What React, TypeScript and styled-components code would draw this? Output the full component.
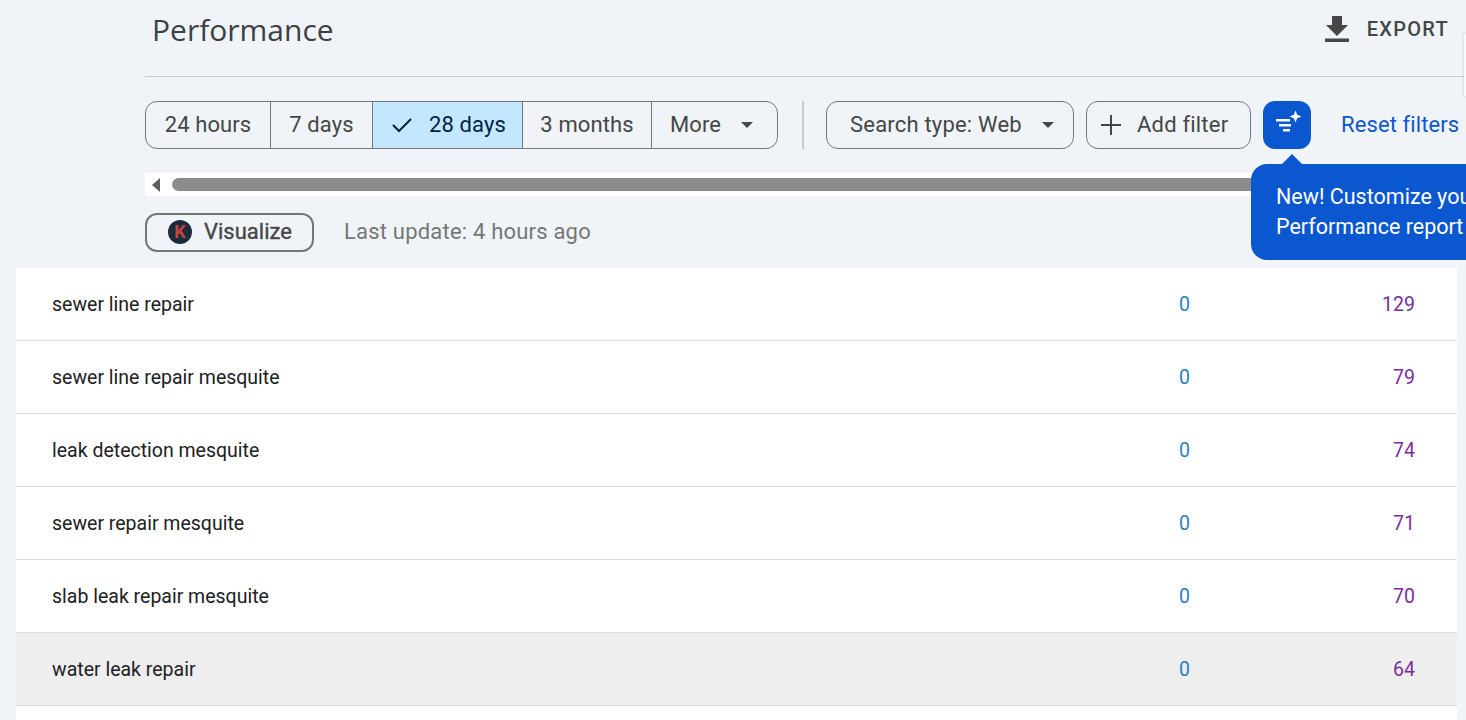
import React from "react";
import styled, { createGlobalStyle } from "styled-components";

const GlobalStyle = createGlobalStyle`
  html, body {
    margin: 0;
    padding: 0;
    height: 100%;
    overflow: hidden;
    background: #f0f4f9;
    font-family: "Roboto", "Liberation Sans", sans-serif;
  }
`;

const Page = styled.div`
  width: 1466px;
  height: 720px;
  overflow: hidden;
  position: relative;
  background: #f0f4f9;
`;

const Top = styled.div`
  padding-left: 145px;
`;

const Header = styled.header`
  height: 77px;
  box-sizing: border-box;
  display: flex;
  align-items: flex-start;
  justify-content: space-between;
  padding: 11px 17px 0 7px;
  border-bottom: 1px solid #c7c9cc;
`;

const Title = styled.h1`
  margin: 0;
  font: 500 30px/37px "Open Sans", sans-serif;
  letter-spacing: 0;
  color: #3c4043;
`;

const ExportButton = styled.div`
  display: flex;
  align-items: center;
  gap: 18px;
  height: 34px;
  margin-top: 1px;
  font: 500 20px/34px "Roboto", sans-serif;
  letter-spacing: 1.3px;
  color: #444746;
`;

const Toolbar = styled.div`
  display: flex;
  align-items: center;
  margin-top: 23px;
  height: 49px;
  white-space: nowrap;
`;

const ChipGroup = styled.div`
  display: flex;
  height: 48px;
  box-sizing: border-box;
  border: 1px solid #747775;
  border-radius: 12px;
  overflow: hidden;
`;

const Segment = styled.div<{ $w: number; $active?: boolean }>`
  width: ${(p) => p.$w}px;
  box-sizing: border-box;
  display: flex;
  align-items: center;
  justify-content: center;
  gap: 16px;
  padding-left: ${(p) => (p.$active ? "2px" : "0")};
  font-size: 22px;
  letter-spacing: 0.1px;
  color: ${(p) => (p.$active ? "#041e49" : "#444746")};
  background: ${(p) => (p.$active ? "#c2e7ff" : "transparent")};
  & + & {
    border-left: 1px solid #747775;
  }
`;

const MoreSegment = styled(Segment)`
  justify-content: flex-start;
  padding-left: 18px;
  gap: 19px;
`;

const Divider = styled.div`
  width: 2px;
  height: 48px;
  background: #c7c9cc;
  margin: 0 22px 0 24px;
`;

const Chip = styled.div<{ $w: number; $pad: number; $gap: number }>`
  width: ${(p) => p.$w}px;
  height: 48px;
  box-sizing: border-box;
  display: flex;
  align-items: center;
  gap: ${(p) => p.$gap}px;
  padding-left: ${(p) => p.$pad}px;
  border: 1px solid #747775;
  border-radius: 12px;
  font-size: 22px;
  letter-spacing: 0.2px;
  color: #444746;
  margin-right: 12px;
`;

const SparkButton = styled.div`
  width: 48px;
  height: 48px;
  border-radius: 12px;
  background: #0b57d0;
  display: flex;
  align-items: center;
  justify-content: center;
  margin-right: 30px;
`;

const ResetLink = styled.span`
  font-size: 22px;
  letter-spacing: 0.1px;
  color: #0b57d0;
`;

const ScrollTrack = styled.div`
  margin-top: 24px;
  height: 23px;
  background: #ffffff;
  display: flex;
  align-items: center;
  padding-left: 7px;
`;

const ScrollArrow = styled.div`
  width: 0;
  height: 0;
  border-top: 7px solid transparent;
  border-bottom: 7px solid transparent;
  border-right: 8px solid #5f5f5f;
  margin-right: 12px;
`;

const ScrollThumb = styled.div`
  flex: 1;
  height: 13px;
  border-radius: 7px 0 0 7px;
  background: #8b8b8b;
`;

const StatusRow = styled.div`
  display: flex;
  align-items: center;
  margin-top: 17px;
  gap: 30px;
`;

const VisualizeButton = styled.div`
  width: 169px;
  height: 39px;
  box-sizing: border-box;
  display: flex;
  align-items: center;
  gap: 12px;
  padding: 0 0 2px 21px;
  border: 2px solid #747775;
  border-radius: 12px;
  font-size: 22px;
  font-weight: 400;
  -webkit-text-stroke: 0.35px #444746;
  color: #444746;
`;

const Avatar = styled.div`
  width: 24px;
  height: 24px;
  border-radius: 50%;
  background: #1c2b3c;
  color: #c8433f;
  font: 700 18px/24px "Roboto", sans-serif;
  -webkit-text-stroke: 0;
  text-align: center;
`;

const UpdateText = styled.span`
  font-size: 22px;
  letter-spacing: 0.2px;
  color: #747775;
  padding-bottom: 2px;
`;

const Tip = styled.div`
  position: absolute;
  left: 1251px;
  top: 164px;
  width: 260px;
  height: 96px;
  box-sizing: border-box;
  padding: 18px 0 0 25px;
  background: #0b57d0;
  border-radius: 16px;
  color: #ffffff;
  font-size: 21.5px;
  line-height: 30px;
  white-space: nowrap;

  &::before {
    content: "";
    position: absolute;
    left: 30px;
    top: -10px;
    border-left: 11px solid transparent;
    border-right: 11px solid transparent;
    border-bottom: 11px solid #0b57d0;
  }
`;

const EdgePanel = styled.div`
  position: absolute;
  left: 1464px;
  top: 34px;
  width: 10px;
  height: 62px;
  background: #f8f9fb;
  box-shadow: 0 0 3px rgba(60, 64, 67, 0.25);
`;

const Table = styled.div`
  margin: 16px 9px 0 16px;
  background: #ffffff;
`;

const Row = styled.div<{ $hover?: boolean }>`
  height: 73px;
  box-sizing: border-box;
  display: flex;
  align-items: center;
  padding: 0 42px 0 36px;
  border-bottom: 1px solid #dadce0;
  background: ${(p) => (p.$hover ? "#eeeeee" : "#ffffff")};
  font-size: 19.5px;
`;

const Query = styled.span`
  flex: 1;
  color: #202124;
`;

const Clicks = styled.span`
  width: 40px;
  text-align: right;
  color: #2c7fc0;
  margin-right: 165px;
`;

const Impressions = styled.span`
  width: 60px;
  text-align: right;
  color: #7b2d9e;
`;

const rows = [
  { q: "sewer line repair", i: 129 },
  { q: "sewer line repair mesquite", i: 79 },
  { q: "leak detection mesquite", i: 74 },
  { q: "sewer repair mesquite", i: 71 },
  { q: "slab leak repair mesquite", i: 70 },
  { q: "water leak repair", i: 64, hover: true },
  { q: "", i: "" },
];

const Caret = () => (
  <svg width="14" height="8" viewBox="0 0 14 8">
    <path d="M1 1h12L7 7z" fill="#444746" />
  </svg>
);

export default function App() {
  return (
    <Page>
      <GlobalStyle />
      <Top>
        <Header>
          <Title>Performance</Title>
          <ExportButton>
            <svg width="24" height="26" viewBox="0 0 24 26">
              <path d="M7 0h10v9h6L12 20 1 9h6zM0 22.5h24V26H0z" fill="#444746" />
            </svg>
            EXPORT
          </ExportButton>
        </Header>
        <Toolbar>
          <ChipGroup>
            <Segment $w={124}>24 hours</Segment>
            <Segment $w={102}>7 days</Segment>
            <Segment $w={150} $active>
              <svg width="22" height="16" viewBox="0 0 22 16">
                <path d="M2 8l6 6L20 2" fill="none" stroke="#041e49" strokeWidth="2" />
              </svg>
              28 days
            </Segment>
            <Segment $w={129}>3 months</Segment>
            <MoreSegment $w={126}>More<Caret /></MoreSegment>
          </ChipGroup>
          <Divider />
          <Chip $w={248} $pad={23} $gap={19}>Search type: Web<Caret /></Chip>
          <Chip $w={165} $pad={14} $gap={16}>
            <svg width="20" height="20" viewBox="0 0 20 20">
              <path d="M9 0h2v9h9v2h-9v9H9v-9H0V9h9z" fill="#444746" />
            </svg>
            Add filter
          </Chip>
          <SparkButton>
            <svg width="32" height="32" viewBox="0 0 32 32">
              <path d="M5 10h14v2.4H5zM8 15h12v2.4H8zM12 20h7v2.4h-7z" fill="#ffffff" />
              <path d="M24.5 1.5l1.7 4.3 4.3 1.7-4.3 1.7-1.7 4.3-1.7-4.3-4.3-1.7 4.3-1.7z" fill="#ffffff" />
            </svg>
          </SparkButton>
          <ResetLink>Reset filters</ResetLink>
        </Toolbar>
        <ScrollTrack>
          <ScrollArrow />
          <ScrollThumb />
        </ScrollTrack>
        <StatusRow>
          <VisualizeButton>
            <Avatar>K</Avatar>
            Visualize
          </VisualizeButton>
          <UpdateText>Last update: 4 hours ago</UpdateText>
        </StatusRow>
      </Top>
      <Table>
        {rows.map((r, n) => (
          <Row key={n} $hover={r.hover}>
            <Query>{r.q}</Query>
            {r.q && <Clicks>0</Clicks>}
            {r.q && <Impressions>{r.i}</Impressions>}
          </Row>
        ))}
      </Table>
      <EdgePanel />
      <Tip>
        New! Customize your
        <br />
        Performance report
      </Tip>
    </Page>
  );
}
